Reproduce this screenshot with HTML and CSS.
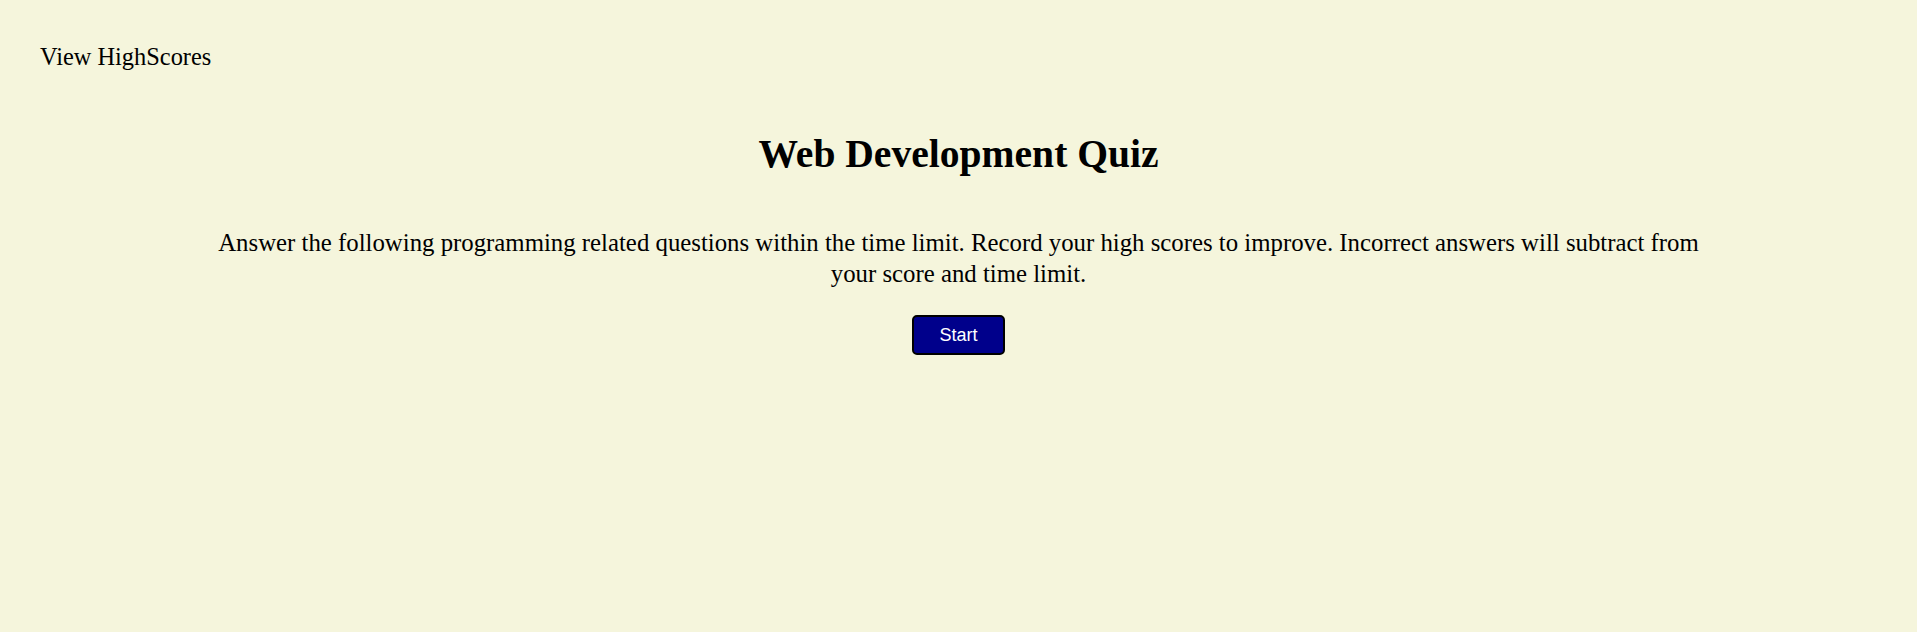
FILE: index.html
```html
<!DOCTYPE html>
<html>
<head>
<meta charset="utf-8">
<link rel="stylesheet" href="styles.css">
</head>
<body>
<header class="top">
  <a class="highscores">View HighScores</a>
</header>
<main class="quiz">
  <h1 class="title">Web Development Quiz</h1>
  <p class="intro">Answer the following programming related questions within the time limit. Record your high scores to improve. Incorrect answers will subtract from your score and time limit.</p>
  <button class="start">Start</button>
</main>
</body>
</html>
```
FILE: styles.css
```css
html, body {
  margin: 0;
  padding: 0;
}
body {
  background: #f5f5dc;
  font-family: "Liberation Serif", "Times New Roman", serif;
  color: #000;
  height: 632px;
}
.top {
  display: flex;
  padding: 41px 40px 0 40px;
}
.highscores {
  font-size: 24.4px;
  line-height: 32px;
}
.quiz {
  display: flex;
  flex-direction: column;
  align-items: center;
}
.title {
  font-size: 39.6px;
  line-height: 46px;
  margin: 58px 0 51px 0;
}
.intro {
  width: 78%;
  font-size: 24.8px;
  line-height: 30.7px;
  text-align: center;
  margin: 0 0 26px 0;
}
.start {
  width: 93px;
  height: 40px;
  background: #00008b;
  color: #fff;
  border: 2px solid #000;
  border-radius: 5px;
  font-family: "Liberation Sans", Arial, sans-serif;
  font-size: 18px;
}
```
